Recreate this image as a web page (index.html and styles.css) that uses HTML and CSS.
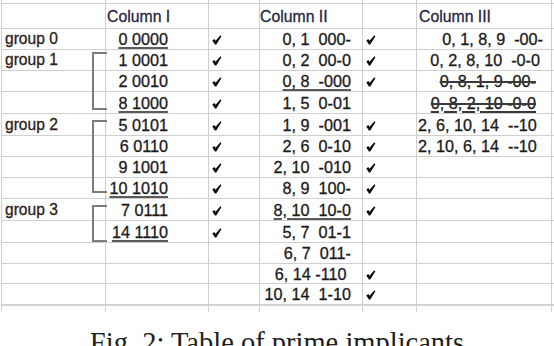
FILE: index.html
```html
<!DOCTYPE html>
<html>
<head>
<meta charset="utf-8">
<link rel="stylesheet" href="styles.css">
</head>
<body>
<div class="sheet">
  <div class="grid">
    <!-- cropped top row -->
    <div class="c"></div><div class="c"></div><div class="c"></div><div class="c"></div><div class="c"></div><div class="c"></div><div class="c"></div>
    <!-- header -->
    <div class="c hd"></div>
    <div class="c hd h1">Column I</div>
    <div class="c hd"></div>
    <div class="c hd h2">Column II</div>
    <div class="c hd"></div>
    <div class="c hd h3">Column III</div>
    <div class="c hd"></div>
    <!-- row 1 -->
    <div class="c lbl">group 0</div>
    <div class="c c1"><span class="u">0 0000</span></div>
    <div class="c k"><svg class="chk" viewBox="0 0 10 10"><path d="M0.3 5.6 L2.3 4.1 L3.6 5.8 L8.4 0.3 L9.4 1.2 L4.3 9.4 L2.9 9.4 Z"/></svg></div>
    <div class="c c2">0, 1  000-</div>
    <div class="c k"><svg class="chk" viewBox="0 0 10 10"><path d="M0.3 5.6 L2.3 4.1 L3.6 5.8 L8.4 0.3 L9.4 1.2 L4.3 9.4 L2.9 9.4 Z"/></svg></div>
    <div class="c c3 r1">0, 1, 8, 9  -00-</div>
    <div class="c"></div>
    <!-- row 2 -->
    <div class="c lbl">group 1</div>
    <div class="c c1">1 0001</div>
    <div class="c k"><svg class="chk" viewBox="0 0 10 10"><path d="M0.3 5.6 L2.3 4.1 L3.6 5.8 L8.4 0.3 L9.4 1.2 L4.3 9.4 L2.9 9.4 Z"/></svg></div>
    <div class="c c2">0, 2  00-0</div>
    <div class="c k"><svg class="chk" viewBox="0 0 10 10"><path d="M0.3 5.6 L2.3 4.1 L3.6 5.8 L8.4 0.3 L9.4 1.2 L4.3 9.4 L2.9 9.4 Z"/></svg></div>
    <div class="c c3 r2">0, 2, 8, 10  -0-0</div>
    <div class="c"></div>
    <!-- row 3 -->
    <div class="c lbl"></div>
    <div class="c c1">2 0010</div>
    <div class="c k"><svg class="chk" viewBox="0 0 10 10"><path d="M0.3 5.6 L2.3 4.1 L3.6 5.8 L8.4 0.3 L9.4 1.2 L4.3 9.4 L2.9 9.4 Z"/></svg></div>
    <div class="c c2"><span class="u">0, 8  -000</span></div>
    <div class="c k"><svg class="chk" viewBox="0 0 10 10"><path d="M0.3 5.6 L2.3 4.1 L3.6 5.8 L8.4 0.3 L9.4 1.2 L4.3 9.4 L2.9 9.4 Z"/></svg></div>
    <div class="c c3 r3"><span class="s">0, 8, 1, 9 -00-</span></div>
    <div class="c"></div>
    <!-- row 4 -->
    <div class="c lbl"></div>
    <div class="c c1"><span class="u">8 1000</span></div>
    <div class="c k"><svg class="chk" viewBox="0 0 10 10"><path d="M0.3 5.6 L2.3 4.1 L3.6 5.8 L8.4 0.3 L9.4 1.2 L4.3 9.4 L2.9 9.4 Z"/></svg></div>
    <div class="c c2">1, 5  0-01</div>
    <div class="c k"></div>
    <div class="c c3 r3"><span class="su">0, 8, 2, 10 -0-0</span></div>
    <div class="c"></div>
    <!-- row 5 -->
    <div class="c lbl">group 2</div>
    <div class="c c1">5 0101</div>
    <div class="c k"><svg class="chk" viewBox="0 0 10 10"><path d="M0.3 5.6 L2.3 4.1 L3.6 5.8 L8.4 0.3 L9.4 1.2 L4.3 9.4 L2.9 9.4 Z"/></svg></div>
    <div class="c c2">1, 9  -001</div>
    <div class="c k"><svg class="chk" viewBox="0 0 10 10"><path d="M0.3 5.6 L2.3 4.1 L3.6 5.8 L8.4 0.3 L9.4 1.2 L4.3 9.4 L2.9 9.4 Z"/></svg></div>
    <div class="c c3 lft">2, 6, 10, 14  --10</div>
    <div class="c"></div>
    <!-- row 6 -->
    <div class="c lbl"></div>
    <div class="c c1">6 0110</div>
    <div class="c k"><svg class="chk" viewBox="0 0 10 10"><path d="M0.3 5.6 L2.3 4.1 L3.6 5.8 L8.4 0.3 L9.4 1.2 L4.3 9.4 L2.9 9.4 Z"/></svg></div>
    <div class="c c2">2, 6  0-10</div>
    <div class="c k"><svg class="chk" viewBox="0 0 10 10"><path d="M0.3 5.6 L2.3 4.1 L3.6 5.8 L8.4 0.3 L9.4 1.2 L4.3 9.4 L2.9 9.4 Z"/></svg></div>
    <div class="c c3 lft">2, 10, 6, 14  --10</div>
    <div class="c"></div>
    <!-- row 7 -->
    <div class="c lbl"></div>
    <div class="c c1">9 1001</div>
    <div class="c k"><svg class="chk" viewBox="0 0 10 10"><path d="M0.3 5.6 L2.3 4.1 L3.6 5.8 L8.4 0.3 L9.4 1.2 L4.3 9.4 L2.9 9.4 Z"/></svg></div>
    <div class="c c2">2, 10  -010</div>
    <div class="c k"><svg class="chk" viewBox="0 0 10 10"><path d="M0.3 5.6 L2.3 4.1 L3.6 5.8 L8.4 0.3 L9.4 1.2 L4.3 9.4 L2.9 9.4 Z"/></svg></div>
    <div class="c c3"></div>
    <div class="c"></div>
    <!-- row 8 -->
    <div class="c lbl"></div>
    <div class="c c1"><span class="u">10 1010</span></div>
    <div class="c k"><svg class="chk" viewBox="0 0 10 10"><path d="M0.3 5.6 L2.3 4.1 L3.6 5.8 L8.4 0.3 L9.4 1.2 L4.3 9.4 L2.9 9.4 Z"/></svg></div>
    <div class="c c2">8, 9  100-</div>
    <div class="c k"><svg class="chk" viewBox="0 0 10 10"><path d="M0.3 5.6 L2.3 4.1 L3.6 5.8 L8.4 0.3 L9.4 1.2 L4.3 9.4 L2.9 9.4 Z"/></svg></div>
    <div class="c c3"></div>
    <div class="c"></div>
    <!-- row 9 -->
    <div class="c lbl">group 3</div>
    <div class="c c1">7 0111</div>
    <div class="c k"><svg class="chk" viewBox="0 0 10 10"><path d="M0.3 5.6 L2.3 4.1 L3.6 5.8 L8.4 0.3 L9.4 1.2 L4.3 9.4 L2.9 9.4 Z"/></svg></div>
    <div class="c c2"><span class="u">8, 10  10-0</span></div>
    <div class="c k"><svg class="chk" viewBox="0 0 10 10"><path d="M0.3 5.6 L2.3 4.1 L3.6 5.8 L8.4 0.3 L9.4 1.2 L4.3 9.4 L2.9 9.4 Z"/></svg></div>
    <div class="c c3"></div>
    <div class="c"></div>
    <!-- row 10 -->
    <div class="c lbl"></div>
    <div class="c c1"><span class="u">14 1110</span></div>
    <div class="c k"><svg class="chk" viewBox="0 0 10 10"><path d="M0.3 5.6 L2.3 4.1 L3.6 5.8 L8.4 0.3 L9.4 1.2 L4.3 9.4 L2.9 9.4 Z"/></svg></div>
    <div class="c c2">5, 7  01-1</div>
    <div class="c k"></div>
    <div class="c c3"></div>
    <div class="c"></div>
    <!-- row 11 -->
    <div class="c lbl"></div>
    <div class="c c1"></div>
    <div class="c k"></div>
    <div class="c c2">6, 7  011-</div>
    <div class="c k"></div>
    <div class="c c3"></div>
    <div class="c"></div>
    <!-- row 12 -->
    <div class="c lbl"></div>
    <div class="c c1"></div>
    <div class="c k"></div>
    <div class="c c2">6, 14 -110 </div>
    <div class="c k"><svg class="chk" viewBox="0 0 10 10"><path d="M0.3 5.6 L2.3 4.1 L3.6 5.8 L8.4 0.3 L9.4 1.2 L4.3 9.4 L2.9 9.4 Z"/></svg></div>
    <div class="c c3"></div>
    <div class="c"></div>
    <!-- row 13 -->
    <div class="c lbl"></div>
    <div class="c c1"></div>
    <div class="c k"></div>
    <div class="c c2">10, 14  1-10</div>
    <div class="c k"><svg class="chk" viewBox="0 0 10 10"><path d="M0.3 5.6 L2.3 4.1 L3.6 5.8 L8.4 0.3 L9.4 1.2 L4.3 9.4 L2.9 9.4 Z"/></svg></div>
    <div class="c c3"></div>
    <div class="c"></div>
    <!-- cropped bottom row -->
    <div class="c last"></div><div class="c last"></div><div class="c last"></div><div class="c last"></div><div class="c last"></div><div class="c last"></div><div class="c last"></div>
  </div>
  <div class="br b1"></div>
  <div class="br b2"></div>
  <div class="br b3"></div>
</div>
<p class="caption">Fig. 2: Table of prime implicants</p>
</body>
</html>
```

FILE: styles.css
```css
html, body {
  margin: 0;
  padding: 0;
  background: #ffffff;
}

.sheet {
  position: relative;
  height: 312px;
  overflow: hidden;
}

.grid {
  display: grid;
  margin-left: 1px;
  padding-left: 1px;
  background: #cfcfcf;
  column-gap: 1px;
  row-gap: 1px;
  grid-template-columns: 103px 102px 50px 102px 53px 134px 1fr;
  grid-template-rows: 3px 24px 20px 20px 20px 21px 21px 20px 20px 20px 21px 21px 20px 19px 20px 8px;
  font-family: "Liberation Sans", Arial, sans-serif;
  font-size: 16.2px;
  color: #1a1a1a;
  -webkit-text-stroke: 0.3px #1a1a1a;
}

.c {
  background: #ffffff;
  white-space: pre;
  line-height: 20px;
  overflow: visible;
  display: flex;
  align-items: center;
}

.hd {
  align-items: flex-start;
  padding-top: 3px;
  font-size: 15.8px;
  color: #262640;
  -webkit-text-stroke: 0.3px #262640;
}

.h1 { padding-left: 1px; }
.h2 { padding-left: 0; }
.h3 { padding-left: 2px; }

.lbl {
  padding-left: 3px;
  font-size: 15.6px;
  color: #2a2218;
  -webkit-text-stroke: 0.3px #2a2218;
}

.c1 {
  justify-content: flex-end;
  padding-right: 40px;
}

.c2 {
  justify-content: flex-end;
  padding-right: 11px;
}

.c3 { justify-content: flex-end; }
.r1 { padding-right: 8px; }
.r2 { padding-right: 11px; }
.r3 { padding-right: 15px; }
.c3.lft {
  justify-content: flex-start;
  padding-left: 1px;
}

.k {
  padding-left: 3px;
}

.chk {
  width: 10px;
  height: 10px;
  margin-top: 2px;
  fill: #0c0c0c;
}

.u {
  text-decoration: underline;
  text-decoration-color: #5a5a5a;
  text-decoration-thickness: 2px;
  text-underline-offset: 2px;
}

.s {
  text-decoration: line-through;
  text-decoration-color: #3a3a3a;
  text-decoration-thickness: 2px;
}

.su {
  text-decoration: line-through underline;
  text-decoration-color: #3a3a3a;
  text-decoration-thickness: 2px;
  text-underline-offset: 2px;
}

.last {
  border-top: 1px solid #d6d6d6;
}

.br {
  position: absolute;
  left: 92px;
  width: 15px;
  box-sizing: border-box;
  border: 2px solid #7c7c7c;
  border-right: none;
}

.b1 { top: 52px; height: 58px; }
.b2 { top: 120px; height: 73px; }
.b3 { top: 205px; height: 37px; }

.caption {
  margin: 15px 0 0 0;
  text-align: center;
  font-family: "Liberation Serif", "Times New Roman", serif;
  font-size: 28.5px;
  line-height: 32px;
  color: #1e1e1e;
}
```
